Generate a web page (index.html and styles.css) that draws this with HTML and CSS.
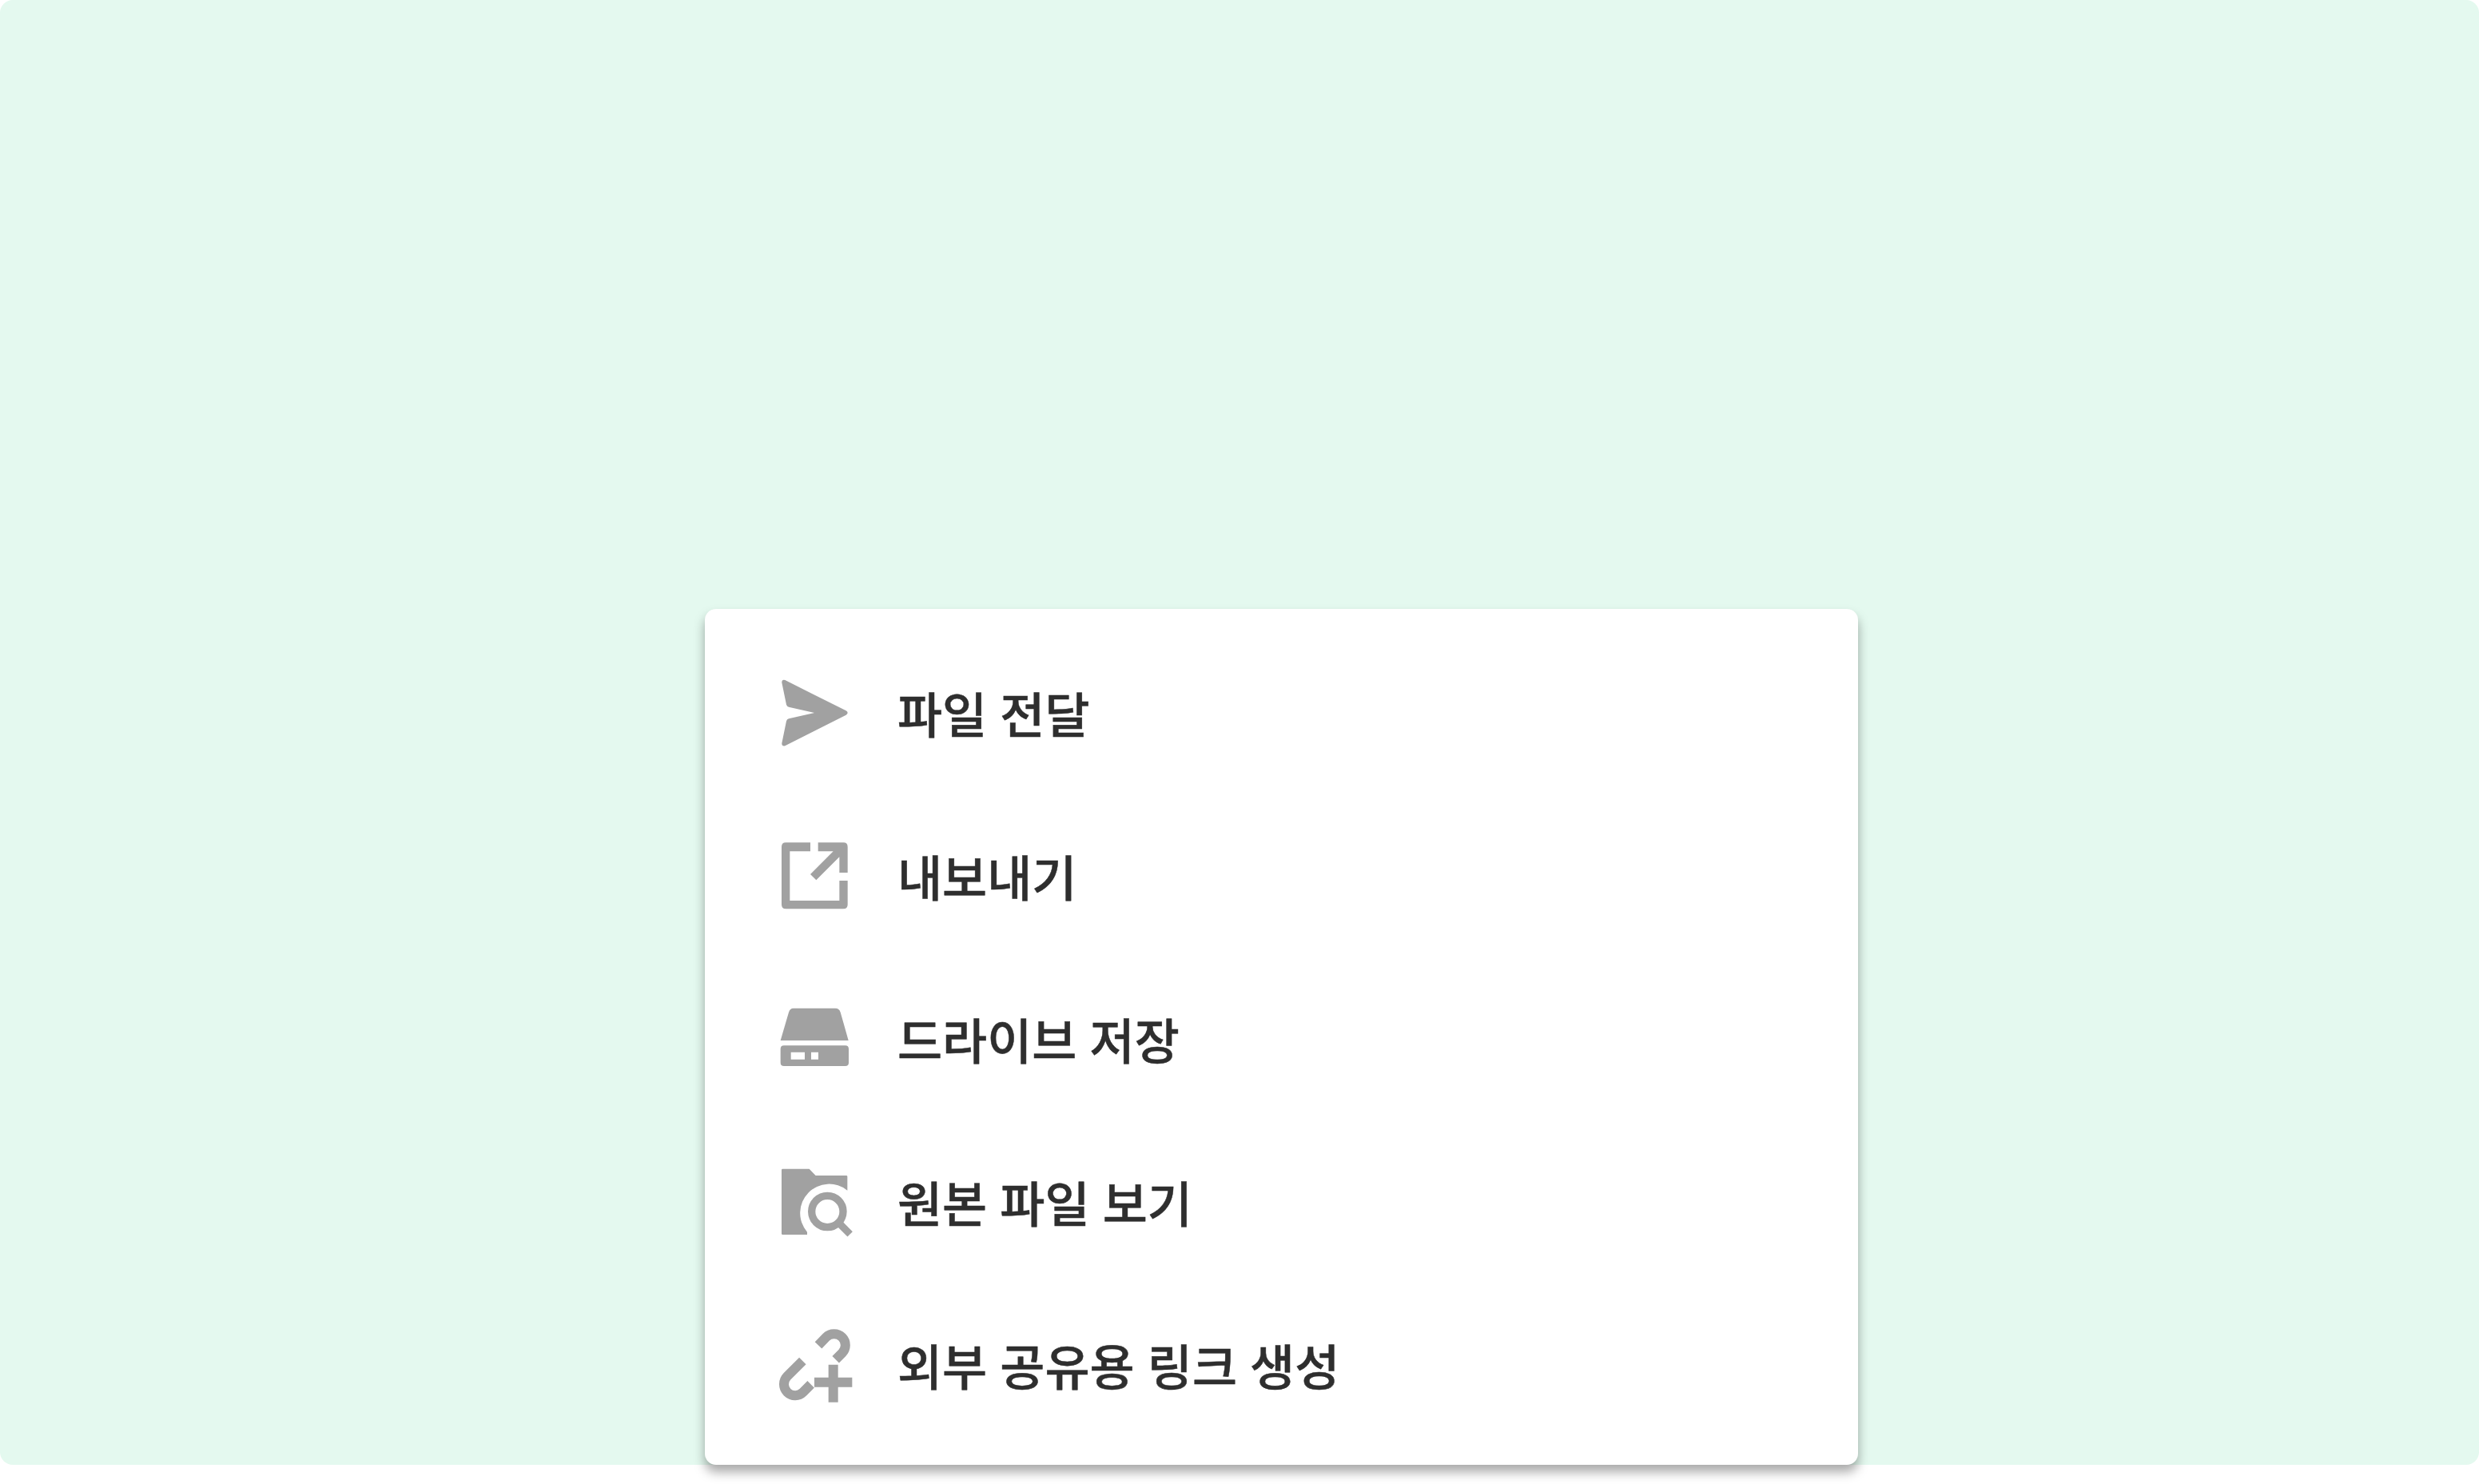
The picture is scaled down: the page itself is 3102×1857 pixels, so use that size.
FILE: index.html
```html
<!DOCTYPE html>
<html lang="ko">
<head>
    <meta charset="UTF-8">
    <meta name="viewport" content="width=device-width, initial-scale=1.0">
    <title>파일 메뉴</title>
    <link rel="stylesheet" href="styles.css">
</head>
<body>

<div class="stage">
    <ul class="menu">
        <li class="menu-item">
            <svg class="icon" viewBox="66 42 288 288">
                <path d="M97 63L326 178Q338 186 326 194L97 310Q84 312 85 300L102 217Q104 210 111 208L207 186L111 164Q104 162 102 155L85 73Q84 60 97 63z"/>
            </svg>
            <span class="label">파일 전달</span>
        </li>
        <li class="menu-item">
            <svg class="icon" viewBox="66 39 288 288">
                <path d="M192 58V91H115V276H301V201H332V291Q332 307 316 307H100Q84 307 84 291V74Q84 58 100 58z"/>
                <path d="M221 58H316Q332 58 332 74V171H301V112L214 199L192 177L278 91H221z"/>
            </svg>
            <span class="label">내보내기</span>
        </li>
        <li class="menu-item">
            <svg class="icon" viewBox="66 36 288 288">
                <path d="M128 65H286Q300 65 305 80L335 186H80L111 80Q116 65 128 65z"/>
                <path fill-rule="evenodd" d="M93 205H323Q336 205 336 218V269Q336 282 323 282H93Q80 282 80 269V218Q80 205 93 205zM119 230V257H171V230zM195 230V257H222V230z"/>
            </svg>
            <span class="label">드라이브 저장</span>
        </li>
        <li class="menu-item">
            <svg class="icon" viewBox="66 48 288 288">
                <path d="M88 68H188L212 93H327Q331 93 331 97V149A109 109 0 0 0 180 305V315H88Q84 315 84 311V72Q84 68 88 68z"/>
                <circle class="line" cx="256" cy="228" r="59" stroke-width="28"/>
                <path class="line" stroke-width="27" d="M301 273L341 313"/>
            </svg>
            <span class="label">원본 파일 보기</span>
        </li>
        <li class="menu-item">
            <svg class="icon" viewBox="66 45 288 288">
                <path class="line" stroke-width="36" d="M222 115L251 85A42 42 0 0 1 311 145L287 169"/>
                <path class="line" stroke-width="36" d="M163 174L105 232A42 42 0 0 0 165 291L194 262"/>
                <path d="M260 188H296V236H349V272H296V329H260V272H207V236H260z"/>
            </svg>
            <span class="label">외부 공유용 링크 생성</span>
        </li>
    </ul>
</div>

</body>
</html>
```
FILE: styles.css
```css
body {
    min-height: 1857px;
    margin: 0;
    background: #fff;
    font-family: "Noto Sans CJK KR", sans-serif;
}
.stage {
    display: flex;
    align-items: flex-end;
    box-sizing: border-box;
    height: 1833px;
    padding-left: 882px;
    border-radius: 16px;
    background: #e4f9ef;
}
.menu {
    box-sizing: border-box;
    width: 1443px;
    height: 1071px;
    margin: 0;
    padding: 28px 90px 23px;
    list-style: none;
    border-radius: 14px;
    background: #fff;
    box-shadow: 0 9px 14px rgba(0, 0, 0, 0.34);
}
.menu-item {
    display: flex;
    align-items: center;
    gap: 55px;
    height: 204px;
    color: #2e2e2e;
    font-size: 61px;
    font-weight: 500;
    line-height: 1;
    white-space: nowrap;
    word-spacing: -1px;
}
.label {
    padding-bottom: 1px;
    -webkit-text-stroke: 0.5px #2e2e2e;
}
.icon {
    width: 96px;
    height: 96px;
    fill: #a1a1a1;
}
.icon .line {
    fill: none;
    stroke: #a1a1a1;
}
```
